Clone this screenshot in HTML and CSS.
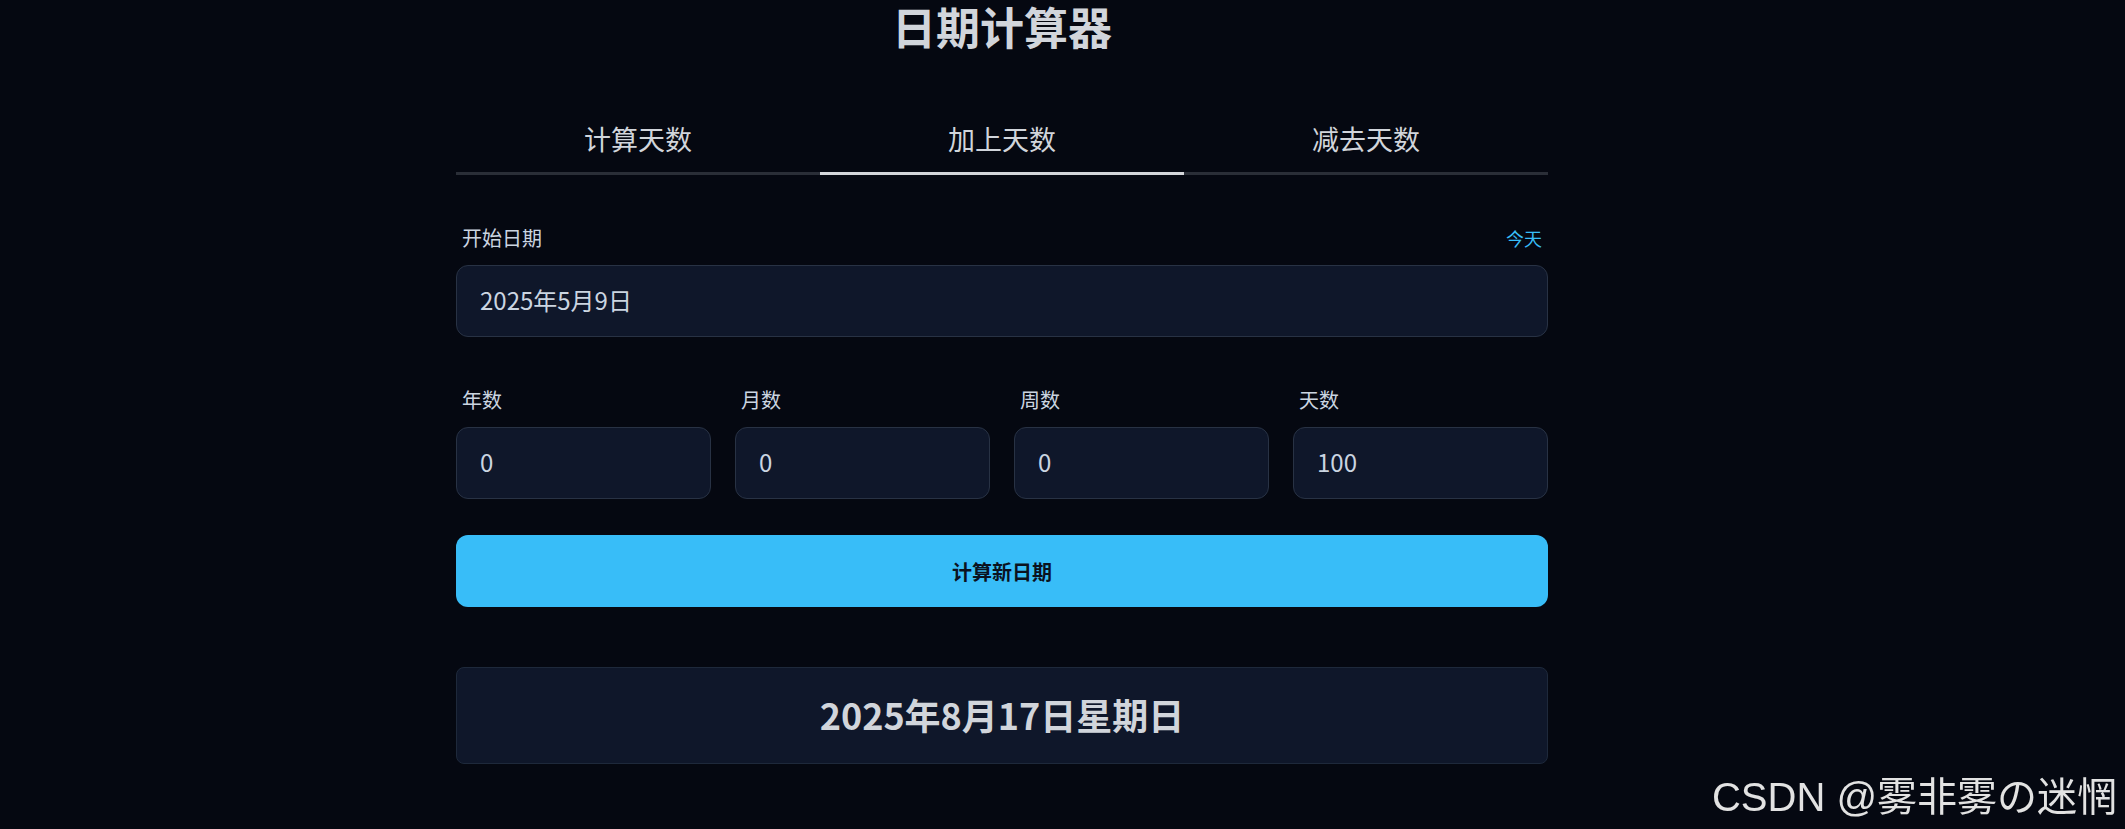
FILE: index.html
```html
<!DOCTYPE html>
<html lang="zh-CN">
<head>
    <meta charset="UTF-8">
    <meta name="viewport" content="width=device-width, initial-scale=1.0">
    <title>日期计算器</title>
    <link rel="stylesheet" href="styles.css">
</head>
<body>
    <div class="container">
        <h1>日期计算器</h1>

        <div class="tabs">
            <div class="tab">计算天数</div>
            <div class="tab active">加上天数</div>
            <div class="tab">减去天数</div>
        </div>

        <div class="field start-field">
            <div class="label-row">
                <label for="start-date">开始日期</label>
                <a class="today" href="#">今天</a>
            </div>
            <input id="start-date" class="input" type="text" value="2025年5月9日">
        </div>

        <div class="amounts">
            <div class="field">
                <label for="years">年数</label>
                <input id="years" class="input" type="text" value="0">
            </div>
            <div class="field">
                <label for="months">月数</label>
                <input id="months" class="input" type="text" value="0">
            </div>
            <div class="field">
                <label for="weeks">周数</label>
                <input id="weeks" class="input" type="text" value="0">
            </div>
            <div class="field">
                <label for="days">天数</label>
                <input id="days" class="input" type="text" value="100">
            </div>
        </div>

        <button class="calc-btn">计算新日期</button>

        <div class="result">2025年8月17日星期日</div>
    </div>

    <div class="watermark">CSDN @雾非雾の迷惘</div>
</body>
</html>
```

FILE: styles.css
```css
body { margin: 0; background: #050811; color: #cbd5e1; font-family: "Noto Sans CJK SC", "Noto Sans", sans-serif; }
.container { width: 1092px; margin: 0 0 0 456px; }
h1 { margin: 4px 0 59px; font-size: 44px; line-height: 44px; font-weight: 700; text-align: center; color: #d1d5db; }

.tabs { display: grid; grid-template-columns: repeat(3, 1fr); }
.tab { padding: 18px 0 20px; font-size: 27px; line-height: 27px; text-align: center; color: #d1d5db; border-bottom: 3px solid #2a2e37; }
.tab.active { border-bottom-color: #d4d6da; }

.field label { display: block; padding-left: 6px; font-size: 20px; line-height: 20px; color: #cbd5e1; }
.start-field { margin-top: 53px; }
.label-row { display: flex; justify-content: space-between; align-items: center; }
.today { padding-right: 6px; font-size: 18px; line-height: 20px; color: #38bdf8; text-decoration: none; }

.input { display: block; box-sizing: border-box; width: 100%; height: 72px; margin-top: 17px; padding: 0 23px 4px; font-family: inherit; font-size: 24px; color: #cbd5e1; background: #0f172a; border: 1px solid #283244; border-radius: 12px; outline: none; }

.amounts { display: grid; grid-template-columns: repeat(4, 1fr); gap: 24px; margin-top: 53px; }

.calc-btn { display: block; width: 100%; height: 72px; margin-top: 36px; font-family: inherit; font-size: 20px; font-weight: 700; color: #0b1220; background: #38bdf8; border: none; border-radius: 12px; cursor: pointer; }

.result { box-sizing: border-box; height: 97px; margin-top: 60px; padding-bottom: 4px; display: flex; align-items: center; justify-content: center; font-size: 36px; font-weight: 700; color: #d1d5db; background: #0f172a; border: 1px solid #1e293b; border-radius: 8px; }

.watermark { position: fixed; right: 8px; bottom: 12px; font-family: "Liberation Sans", "Noto Sans CJK SC", sans-serif; font-size: 40px; line-height: 40px; color: #e2e2e2; }
```
